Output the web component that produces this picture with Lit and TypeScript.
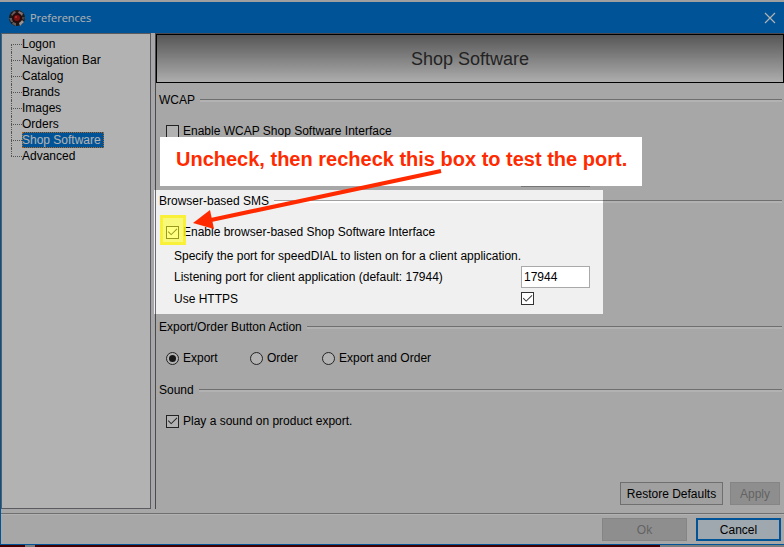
import { LitElement, html, css, svg } from "lit";
import { customElement, state } from "lit/decorators.js";
import { classMap } from "lit/directives/class-map.js";

const PAGES = [
  "Logon",
  "Navigation Bar",
  "Catalog",
  "Brands",
  "Images",
  "Orders",
  "Shop Software",
  "Advanced",
];

const ACTIONS = ["Export", "Order", "Export and Order"];

const appIcon = svg`
  <circle cx="8" cy="8" r="8" fill="#2a2424"/>
  <path d="M2 5 L5 1 L7 2 L4 6 Z" fill="#9c8484"/>
  <path d="M10 1 L14 3 L13 6 L9 3 Z" fill="#c0a0a0"/>
  <path d="M0 8 L3 8 L4 12 L2 12 Z M4 12 L7 13 L7 16 L3 14 Z" fill="#8c8080"/>
  <path d="M10 13 L13 10 L15 12 L11 16 Z" fill="#dcd4d4"/>
  <path d="M13 7 L16 7 L15 10 L13 9 Z" fill="#6a5a5a"/>
  <circle cx="8" cy="8" r="5" fill="#3a1010"/>
  <circle cx="8" cy="8" r="3" fill="#b01818"/>
  <circle cx="7" cy="7" r="1" fill="#ff5040"/>`;

@customElement("app-root")
export class AppRoot extends LitElement {
  @state() private page = "Shop Software";
  @state() private action = "Export";

  static styles = css`
    :host {
      display: flex;
      flex-direction: column;
      position: relative;
      min-height: 100vh;
      overflow: hidden;
      background: #e4e4e4;
      font: 12px/16px "Liberation Sans", Arial, sans-serif;
      color: #000;
    }
    * {
      box-sizing: border-box;
    }
    .window {
      flex: 1;
      display: flex;
      flex-direction: column;
      margin-top: 2px;
      border-left: 1px solid #0078d7;
      border-bottom: 1px solid #0078d7;
      background: #f0f0f0;
    }
    .titlebar {
      display: flex;
      align-items: center;
      height: 31px;
      padding: 0 8px;
      gap: 5px;
      background: #0078d7;
      color: #fff;
      font-family: "Open Sans", "Noto Sans", sans-serif;
      font-size: 11px;
    }
    .titlebar .name {
      flex: 1;
      font-weight: 400;
    }
    .close {
      display: flex;
      padding: 0;
      border: 0;
      background: none;
    }
    .body {
      flex: 1;
      display: flex;
      gap: 4px;
      padding-bottom: 4px;
    }
    .tree {
      flex: none;
      width: 150px;
      margin: 0;
      padding: 2px 0 0 9px;
      list-style: none;
      border: 1px solid #82828c;
      background: #fff;
    }
    .tree li {
      display: flex;
      height: 16px;
      position: relative;
    }
    .tree li::before {
      content: "";
      width: 11px;
      height: 8px;
      border-bottom: 1px dotted #777;
    }
    .tree li::after {
      content: "";
      position: absolute;
      left: 0;
      top: 0;
      height: 16px;
      border-left: 1px dotted #777;
    }
    .tree li:first-child::after {
      top: 8px;
      height: 8px;
    }
    .tree li:last-child::after {
      height: 8px;
    }
    .tree a {
      padding-right: 3px;
      color: #000;
      text-decoration: none;
      line-height: 16px;
    }
    .tree a.selected {
      background: #0078d7;
      color: #fff;
      outline: 1px dotted #ff9228;
      outline-offset: -1px;
    }
    .panel {
      flex: 1;
      min-width: 0;
      display: flex;
      flex-direction: column;
      border-left: 1px solid #6a6a70;
      border-top: 1px solid #6a6a70;
    }
    h1 {
      display: flex;
      align-items: center;
      justify-content: center;
      height: 49px;
      margin: 0 0 9px;
      border: 1px solid #000;
      background: linear-gradient(#7c7c7c, #f8f8f8);
      color: #333;
      font-size: 18px;
      line-height: 24px;
      font-weight: 400;
    }
    section {
      position: relative;
      padding-left: 3px;
    }
    .wcap {
      margin-bottom: 6px;
    }
    .sms {
      margin-bottom: 10px;
    }
    .action {
      margin-bottom: 16px;
    }
    h2 {
      display: flex;
      align-items: center;
      gap: 5px;
      margin: 0 2px 15px 0;
      font-size: 12px;
      line-height: 16px;
      font-weight: 400;
    }
    h2::after {
      content: "";
      flex: 1;
      height: 2px;
      border-top: 1px solid #a0a0a0;
      background: #fff;
    }
    .check,
    .radio {
      display: flex;
      align-items: center;
      gap: 4px;
      height: 16px;
    }
    .check {
      padding-left: 7px;
    }
    .radios {
      display: grid;
      grid-template-columns: 84px 72px auto;
      padding-left: 7px;
    }
    .details {
      display: grid;
      grid-template-columns: 347px 69px;
      align-items: center;
      margin: 8px 0 0;
      padding-left: 15px;
    }
    .wcap .details {
      margin-top: 26px;
    }
    .note {
      grid-column: 1 / -1;
      margin: 0 0 2px;
    }
    .https {
      display: flex;
      align-items: center;
      height: 21px;
    }
    input[type="text"] {
      height: 22px;
      width: 100%;
      padding: 0 2px;
      border: 1px solid #a9a9a9;
      border-radius: 0;
      background: #fff;
      font: inherit;
      color: #000;
    }
    input[type="checkbox"],
    input[type="radio"] {
      appearance: none;
      flex: none;
      display: grid;
      place-items: center;
      width: 13px;
      height: 13px;
      margin: 0;
      border: 1px solid #333;
      background: #fff;
    }
    input[type="radio"] {
      border-radius: 50%;
    }
    input[type="checkbox"]:checked::before {
      content: "";
      width: 11px;
      height: 11px;
      background: #333;
      clip-path: polygon(8% 50%, 14% 44%, 38% 68%, 88% 18%, 94% 24%, 38% 80%);
    }
    input[type="radio"]:checked::before {
      content: "";
      width: 7px;
      height: 7px;
      border-radius: 50%;
      background: #222;
    }
    .page-buttons {
      display: flex;
      justify-content: flex-end;
      gap: 7px;
      margin-top: auto;
      padding: 0 4px 4px 0;
    }
    .footer {
      display: flex;
      justify-content: flex-end;
      gap: 9px;
      padding: 4px 3px 3px;
      border-top: 1px solid #a0a0a0;
      box-shadow: inset 0 1px #fff;
    }
    .btn {
      height: 23px;
      padding: 0;
      border: 1px solid #a0a0a0;
      border-radius: 0;
      background: #e6e6e6;
      font: inherit;
      color: #000;
    }
    .btn.wide {
      width: 103px;
    }
    .btn.small {
      width: 50px;
    }
    .btn.std {
      width: 85px;
    }
    .btn:disabled {
      border-color: #bfbfbf;
      background: #ccc;
      color: #8f8f8f;
    }
    .btn.default {
      border: 2px solid #0078d7;
      background: #e5f1fb;
    }
    .desktop {
      display: flex;
      height: 2px;
      background: #600000;
    }
    .desktop .tab {
      width: 10px;
      margin-left: 25px;
      background: #b4b4b4;
    }
    .desktop .pane {
      width: 124px;
      margin-left: auto;
      background: #b4b4b4;
    }
    .spotlight {
      position: absolute;
      z-index: 1;
      left: -2px;
      top: -3px;
      width: 449px;
      height: 124px;
      outline: 2000px solid rgba(0, 0, 0, 0.3);
      pointer-events: none;
    }
    .marker {
      position: absolute;
      z-index: 2;
      left: 4px;
      top: 22px;
      width: 26px;
      height: 30px;
      border: 3px solid rgba(250, 236, 30, 0.7);
      background: rgba(255, 255, 6, 0.5);
      pointer-events: none;
    }
    .callout {
      position: absolute;
      z-index: 2;
      left: 4px;
      top: -56px;
      width: 482px;
      height: 49px;
      margin: 0;
      padding: 10px 0 0 16px;
      background: #fff;
      color: #ff2a00;
      font-size: 20px;
      line-height: 24px;
      font-weight: 700;
      white-space: nowrap;
    }
    .arrow {
      position: absolute;
      z-index: 3;
      left: 37px;
      top: -25px;
      pointer-events: none;
    }
  `;

  render() {
    return html`
      <div class="window">
        <header class="titlebar">
          <svg width="16" height="16" viewBox="0 0 16 16" aria-hidden="true">${appIcon}</svg>
          <span class="name">Preferences</span>
          <button class="close" aria-label="Close">
            <svg width="12" height="12" viewBox="0 0 12 12" aria-hidden="true">
              <path d="M1 1 L11 11 M11 1 L1 11" stroke="#fff" stroke-width="1.2" />
            </svg>
          </button>
        </header>
        <div class="body">
          <ul class="tree">
            ${PAGES.map(
              (name) => html`<li>
                <a
                  href="#"
                  class=${classMap({ selected: name === this.page })}
                  @click=${(e: Event) => {
                    e.preventDefault();
                    this.page = name;
                  }}
                  >${name}</a
                >
              </li>`
            )}
          </ul>
          <main class="panel">
            <h1>Shop Software</h1>
            <section class="wcap">
              <h2>WCAP</h2>
              <label class="check"><input type="checkbox" />Enable WCAP Shop Software Interface</label>
              <div class="details">
                <span></span>
                <input type="text" aria-label="WCAP port" disabled />
              </div>
            </section>
            <section class="sms">
              <h2>Browser-based SMS</h2>
              <label class="check"
                ><input type="checkbox" checked />Enable browser-based Shop Software Interface</label
              >
              <div class="details">
                <p class="note">Specify the port for speedDIAL to listen on for a client application.</p>
                <label for="port">Listening port for client application (default: 17944)</label>
                <input id="port" type="text" value="17944" />
                <label for="https">Use HTTPS</label>
                <span class="https"><input id="https" type="checkbox" checked /></span>
              </div>
              <div class="spotlight"></div>
              <div class="marker"></div>
              <p class="callout">Uncheck, then recheck this box to test the port.</p>
              <svg class="arrow" width="250" height="64" viewBox="0 0 250 64" aria-hidden="true">
                <path d="M248 3 L18 52" stroke="#ff2a00" stroke-width="4" />
                <path d="M0 55 L17 42 L21 61 Z" fill="#ff2a00" />
              </svg>
            </section>
            <section class="action">
              <h2>Export/Order Button Action</h2>
              <div class="radios">
                ${ACTIONS.map(
                  (name) => html`<label class="radio"
                    ><input
                      type="radio"
                      name="action"
                      .checked=${name === this.action}
                      @change=${() => (this.action = name)}
                    />${name}</label
                  >`
                )}
              </div>
            </section>
            <section>
              <h2>Sound</h2>
              <label class="check"><input type="checkbox" checked />Play a sound on product export.</label>
            </section>
            <div class="page-buttons">
              <button class="btn wide">Restore Defaults</button>
              <button class="btn small" disabled>Apply</button>
            </div>
          </main>
        </div>
        <footer class="footer">
          <button class="btn std" disabled>Ok</button>
          <button class="btn std default">Cancel</button>
        </footer>
      </div>
      <div class="desktop"><span class="tab"></span><span class="pane"></span></div>
    `;
  }
}
